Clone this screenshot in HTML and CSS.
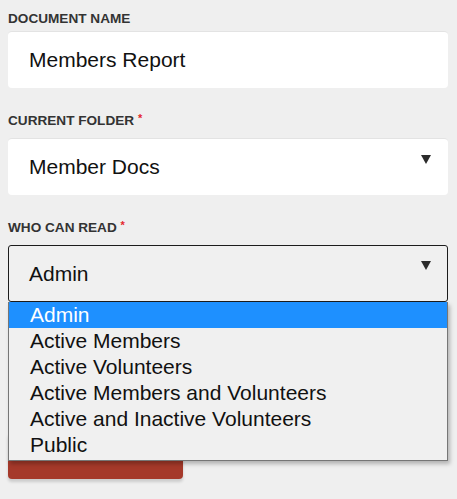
FILE: index.html
```html
<!DOCTYPE html>
<html lang="en">
<head>
  <meta charset="UTF-8">
  <meta name="viewport" content="width=device-width, initial-scale=1.0">
  <title>Document Settings</title>
  <link rel="stylesheet" href="styles.css">
</head>
<body>
  <form class="doc-form">
    <div class="field">
      <label class="field-label">DOCUMENT NAME</label>
      <div class="text-box">Members Report</div>
    </div>

    <div class="field">
      <label class="field-label req">CURRENT FOLDER <span class="star">*</span></label>
      <div class="select-box">
        <span class="select-value">Member Docs</span>
        <span class="caret"></span>
      </div>
    </div>

    <div class="field">
      <label class="field-label req">WHO CAN READ <span class="star">*</span></label>
      <div class="select-wrap">
        <div class="select-box open">
          <span class="select-value">Admin</span>
          <span class="caret"></span>
        </div>
        <ul class="options">
          <li class="option selected">Admin</li>
          <li class="option">Active Members</li>
          <li class="option">Active Volunteers</li>
          <li class="option">Active Members and Volunteers</li>
          <li class="option">Active and Inactive Volunteers</li>
          <li class="option">Public</li>
        </ul>
      </div>
    </div>

    <button type="button" class="save-btn"></button>
  </form>
</body>
</html>
```

FILE: styles.css
```css
body {
  margin: 0;
  background: #efefef;
  font-family: "Liberation Sans", Arial, sans-serif;
  color: #111;
}
.doc-form {
  width: 440px;
  padding: 11px 9px 8px 8px;
  display: flex;
  flex-direction: column;
}
.field {
  display: flex;
  flex-direction: column;
  margin-bottom: 25px;
}
.field-label {
  font-size: 13.6px;
  line-height: 15px;
  font-weight: bold;
  color: #333;
  margin-bottom: 5px;
}
.field-label.req {
  margin-bottom: 9px;
}
.star {
  color: #e4262c;
  font-size: 11px;
  position: relative;
  top: -3px;
}
.text-box, .select-box {
  height: 57px;
  box-sizing: border-box;
  padding: 0 17px 0 21px;
  background: #fff;
  border-top: 1px solid #e3e3e3;
  border-radius: 4px;
  font-size: 21px;
  display: flex;
  align-items: center;
}
.select-box {
  justify-content: space-between;
}
.select-box.open {
  background: #f0f0f0;
  border: 1px solid #1c1c1c;
  border-radius: 3px;
  padding-left: 20px;
  padding-right: 16px;
}
.caret {
  align-self: flex-start;
  margin-top: 16px;
  width: 0;
  height: 0;
  border-left: 5px solid transparent;
  border-right: 5px solid transparent;
  border-top: 9px solid #2b2b2b;
}
.select-box.open .caret {
  margin-top: 15px;
}
.select-wrap {
  position: relative;
}
.options {
  position: absolute;
  top: 100%;
  left: 0;
  width: 440px;
  box-sizing: border-box;
  margin: 0;
  padding: 0 0 2px;
  list-style: none;
  background: #f0f0f0;
  border: 1px solid #767676;
  border-top: none;
  box-shadow: 2px 3px 4px rgba(0, 0, 0, 0.25);
  z-index: 2;
}
.option {
  font-size: 21px;
  line-height: 26px;
  padding-left: 21px;
  color: #111;
}
.option.selected {
  background: #1e90ff;
  color: #fff;
}
.save-btn {
  width: 175px;
  height: 47px;
  margin-top: 105px;
  border: none;
  border-radius: 4px;
  background: #a5392a;
  box-shadow: 0 3px 3px rgba(0, 0, 0, 0.15);
}
```
